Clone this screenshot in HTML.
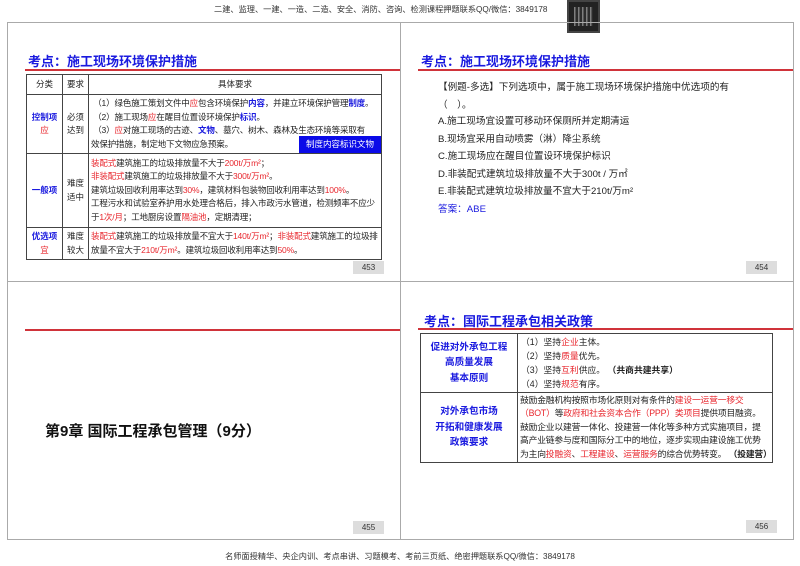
<!DOCTYPE html>
<html><head><meta charset="utf-8"><style>
*{margin:0;padding:0;box-sizing:border-box}
body{width:800px;height:566px;background:#fff;position:relative;overflow:hidden;font-family:"Liberation Sans","Noto Sans CJK SC",sans-serif;color:#222}
.a{position:absolute}
.hdr{top:3px;font-size:8.2px;color:#333;white-space:nowrap}
.ttl{font-size:13px;font-weight:bold;color:#1a1adf}
.rl{height:1.5px;background:#d0333a}
.pg{background:#ddd;font-size:8px;text-align:center;line-height:13px;width:31px;height:13px;color:#333}
.r{color:#e8262d}.b{color:#1a1adf;font-weight:bold}
table{border-collapse:collapse;font-size:8.5px;line-height:13.5px;table-layout:fixed}
td{border:1.2px solid #444;vertical-align:middle}
.q{font-size:9.6px;line-height:17.5px}
</style></head><body>
<div class="a hdr" style="left:214px">二建、监理、一建、一造、二造、安全、消防、咨询、检测课程押题联系QQ/微信：3849178</div>
<div class="a" style="left:567px;top:0;width:33px;height:33px;background:#222;border:2px solid #444"><div style="margin:5px;width:19px;height:19px;background:repeating-linear-gradient(90deg,#bbb 0 1.5px,#333 1.5px 4px),#333;opacity:.6"></div></div>
<div class="a" style="left:7px;top:22px;width:787px;height:518px;border:1px solid #aaa"></div>
<div class="a" style="left:7px;top:281px;width:787px;height:1px;background:#aaa"></div>
<div class="a" style="left:400px;top:22px;width:1px;height:518px;background:#aaa"></div>

<!-- slide 1 -->
<div class="a ttl" style="left:28px;top:51px">考点：施工现场环境保护措施</div>
<div class="a rl" style="left:25px;top:69px;width:375px"></div>
<table class="a" style="left:26px;top:74px;width:356px">
<tr style="height:20px"><td style="width:36px;text-align:center">分类</td><td style="width:26px;text-align:center">要求</td><td style="text-align:center">具体要求</td></tr>
<tr style="height:59px"><td style="text-align:center"><span class="b">控制项</span><br><span class="r">应</span></td><td style="text-align:center">必须<br>达到</td><td style="position:relative;padding-left:2px;letter-spacing:-0.15px;white-space:nowrap">&nbsp;（1）绿色施工策划文件中<span class="r">应</span>包含环境保护<span class="b">内容</span>，并建立环境保护管理<span class="b">制度</span>。<br>&nbsp;（2）施工现场<span class="r">应</span>在醒目位置设环境保护<span class="b">标识</span>。<br>&nbsp;（3）<span class="r">应</span>对施工现场的古迹、<span class="b">文物</span>、墓穴、树木、森林及生态环境等采取有<br>效保护措施，制定地下文物应急预案。
<div class="a" style="right:0;top:41px;width:82px;height:17px;background:#0a0ae8;color:#fff;text-align:center;line-height:17px;letter-spacing:0">制度内容标识文物</div></td></tr>
<tr style="height:74px"><td style="text-align:center" class="b">一般项</td><td style="text-align:center">难度<br>适中</td><td style="padding-left:2px;letter-spacing:-0.15px"><span class="r">装配式</span>建筑施工的垃圾排放量不大于<span class="r">200t/万m²</span>；<br><span class="r">非装配式</span>建筑施工的垃圾排放量不大于<span class="r">300t/万m²</span>。<br>建筑垃圾回收利用率达到<span class="r">30%</span>，建筑材料包装物回收利用率达到<span class="r">100%</span>。<br>工程污水和试验室养护用水处理合格后，排入市政污水管道，检测频率不应少于<span class="r">1次/月</span>；工地厨房设置<span class="r">隔油池</span>，定期清理；</td></tr>
<tr style="height:32px"><td style="text-align:center"><span class="b">优选项</span><br><span class="r">宜</span></td><td style="text-align:center">难度<br>较大</td><td style="padding-left:2px;letter-spacing:-0.15px"><span class="r">装配式</span>建筑施工的垃圾排放量不宜大于<span class="r">140t/万m²</span>；<span class="r">非装配式</span>建筑施工的垃圾排放量不宜大于<span class="r">210t/万m²</span>。建筑垃圾回收利用率达到<span class="r">50%</span>。</td></tr>
</table>
<div class="a pg" style="left:353px;top:261px">453</div>

<!-- slide 2 -->
<div class="a ttl" style="left:421px;top:51px">考点：施工现场环境保护措施</div>
<div class="a rl" style="left:418px;top:69px;width:375px"></div>
<div class="a q" style="left:438px;top:79px;width:340px">【例题-多选】下列选项中，属于施工现场环境保护措施中优选项的有<br>（　）。</div>
<div class="a q" style="left:438px;top:113px">A.施工现场宜设置可移动环保厕所并定期清运<br>B.现场宜采用自动喷雾（淋）降尘系统<br>C.施工现场应在醒目位置设环境保护标识<br>D.非装配式建筑垃圾排放量不大于300t / 万㎡<br>E.非装配式建筑垃圾排放量不宜大于210t/万m²<br><span style="color:#1a1adf">答案：ABE</span></div>
<div class="a pg" style="left:746px;top:261px">454</div>

<!-- slide 3 -->
<div class="a rl" style="left:25px;top:329px;width:375px"></div>
<div class="a" style="left:45px;top:420px;font-size:15px;font-weight:bold;color:#111">第9章 国际工程承包管理（9分）</div>
<div class="a pg" style="left:353px;top:521px">455</div>

<!-- slide 4 -->
<div class="a ttl" style="left:424px;top:311px">考点：国际工程承包相关政策</div>
<div class="a rl" style="left:418px;top:328px;width:375px"></div>
<table class="a" style="left:420px;top:333px;width:353px;font-size:8.8px">
<tr style="height:59px"><td style="width:97px;text-align:center;line-height:15.5px;font-size:9.6px" class="b">促进对外承包工程<br>高质量发展<br>基本原则</td><td style="padding-left:3px;line-height:14px">（1）坚持<span class="r">企业</span>主体。<br>（2）坚持<span class="r">质量</span>优先。<br>（3）坚持<span class="r">互利</span>供应。 <b>（共商共建共享）</b><br>（4）坚持<span class="r">规范</span>有序。</td></tr>
<tr style="height:70px"><td style="text-align:center;line-height:15.5px;font-size:9.6px" class="b">对外承包市场<br>开拓和健康发展<br>政策要求</td><td style="padding-left:2px;line-height:13.6px;letter-spacing:-0.2px;white-space:nowrap">鼓励金融机构按照市场化原则对有条件的<span class="r">建设一运营一移交</span><br><span class="r">（BOT）</span>等<span class="r">政府和社会资本合作（PPP）类项目</span>提供项目融资。<br>鼓励企业以建营一体化、投建营一体化等多种方式实施项目，提<br>高产业链参与度和国际分工中的地位，逐步实现由建设施工优势<br>为主向<span class="r">投融资</span>、<span class="r">工程建设</span>、<span class="r">运营服务</span>的综合优势转变。 <b>（投建营）</b></td></tr>
</table>
<div class="a pg" style="left:746px;top:520px">456</div>

<div class="a hdr" style="top:550px;left:0;width:800px;text-align:center">名师面授精华、央企内训、考点串讲、习题模考、考前三页纸、绝密押题联系QQ/微信：3849178</div>
</body></html>
